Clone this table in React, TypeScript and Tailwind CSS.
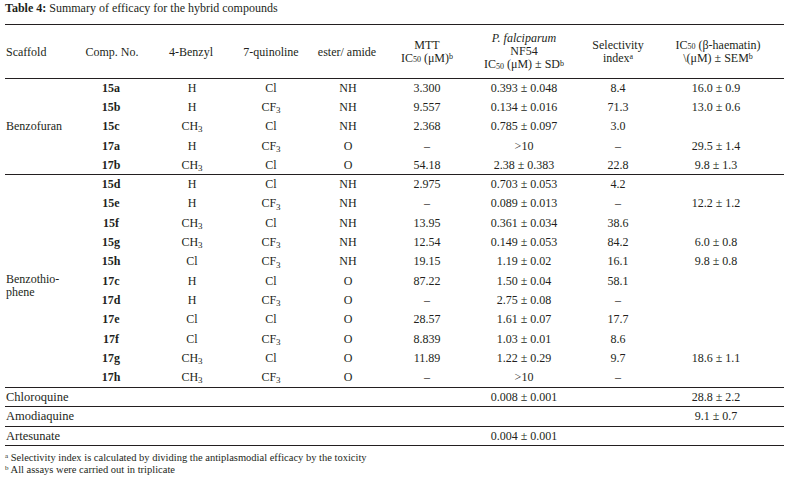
const rows1 = [
  ["15a", "H", "Cl", "NH", "3.300", "0.393 ± 0.048", "8.4", "16.0 ± 0.9"],
  ["15b", "H", "CF3", "NH", "9.557", "0.134 ± 0.016", "71.3", "13.0 ± 0.6"],
  ["15c", "CH3", "Cl", "NH", "2.368", "0.785 ± 0.097", "3.0", ""],
  ["17a", "H", "CF3", "O", "–", ">10", "–", "29.5 ± 1.4"],
  ["17b", "CH3", "Cl", "O", "54.18", "2.38 ± 0.383", "22.8", "9.8 ± 1.3"],
];

const rows2 = [
  ["15d", "H", "Cl", "NH", "2.975", "0.703 ± 0.053", "4.2", ""],
  ["15e", "H", "CF3", "NH", "–", "0.089 ± 0.013", "–", "12.2 ± 1.2"],
  ["15f", "CH3", "Cl", "NH", "13.95", "0.361 ± 0.034", "38.6", ""],
  ["15g", "CH3", "CF3", "NH", "12.54", "0.149 ± 0.053", "84.2", "6.0 ± 0.8"],
  ["15h", "Cl", "CF3", "NH", "19.15", "1.19 ± 0.02", "16.1", "9.8 ± 0.8"],
  ["17c", "H", "Cl", "O", "87.22", "1.50 ± 0.04", "58.1", ""],
  ["17d", "H", "CF3", "O", "–", "2.75 ± 0.08", "–", ""],
  ["17e", "Cl", "Cl", "O", "28.57", "1.61 ± 0.07", "17.7", ""],
  ["17f", "Cl", "CF3", "O", "8.839", "1.03 ± 0.01", "8.6", ""],
  ["17g", "CH3", "Cl", "O", "11.89", "1.22 ± 0.29", "9.7", "18.6 ± 1.1"],
  ["17h", "CH3", "CF3", "O", "–", ">10", "–", ""],
];

const references = [
  ["Chloroquine", "0.008 ± 0.001", "28.8 ± 2.2"],
  ["Amodiaquine", "", "9.1 ± 0.7"],
  ["Artesunate", "0.004 ± 0.001", ""],
];

function Chem({ v }: { v: string }) {
  if (v.endsWith("3")) {
    return (
      <>
        {v.slice(0, -1)}
        <sub>3</sub>
      </>
    );
  }
  return <>{v}</>;
}

// header sub/superscripts kept tight so they stay in their own line
function Sup({ children }: { children: React.ReactNode }) {
  return <sup className="top-[-0.3em] text-[8px]">{children}</sup>;
}

function Sub({ children }: { children: React.ReactNode }) {
  return <sub className="bottom-[-0.1em] text-[8px]">{children}</sub>;
}

function DataRow({ r, scaffold, last }: { r: string[]; scaffold?: React.ReactNode; last?: boolean }) {
  return (
    <tr className={`h-[19.3px] ${last ? "border-b border-[#231f20]" : ""}`}>
      {scaffold}
      <td className="text-center font-bold pr-[2px]">{r[0]}</td>
      <td className="text-center pl-[2px]">
        <Chem v={r[1]} />
      </td>
      <td className="text-center">
        <Chem v={r[2]} />
      </td>
      <td className="text-center pl-[2px]">{r[3]}</td>
      <td className="text-center">{r[4]}</td>
      <td className="text-center">{r[5]}</td>
      <td className="text-center">{r[6]}</td>
      <td className="text-center pr-[4px]">{r[7]}</td>
    </tr>
  );
}

export default function App() {
  return (
    <div className="w-[788px] h-[481px] bg-white text-[#231f20] font-['Liberation_Serif',serif] px-[5px] pt-[1px] overflow-hidden">
      <p className="text-[12px] leading-[14px]">
        <span className="font-bold">Table 4:</span> Summary of efficacy for the hybrid compounds
      </p>

      <table className="table-fixed border-collapse w-[779px] mt-[9px] text-[12px] leading-[13px]">
        <colgroup>
          <col className="w-[75px]" />
          <col className="w-[64px]" />
          <col className="w-[94px]" />
          <col className="w-[66px]" />
          <col className="w-[86px]" />
          <col className="w-[74px]" />
          <col className="w-[120px]" />
          <col className="w-[68px]" />
          <col className="w-[132px]" />
        </colgroup>
        <thead>
          <tr className="h-[54px] border-y-[1.3px] border-[#231f20] align-middle">
            <th className="text-left font-normal pl-[1px] pt-[2px]">Scaffold</th>
            <th className="font-normal whitespace-nowrap pt-[2px]">Comp. No.</th>
            <th className="font-normal pt-[2px]">4-Benzyl</th>
            <th className="font-normal whitespace-nowrap pt-[2px]">7-quinoline</th>
            <th className="font-normal whitespace-nowrap pt-[2px]">ester/ amide</th>
            <th className="font-normal whitespace-nowrap">
              MTT
              <br />
              IC<Sub>50</Sub> (μM)<Sup>b</Sup>
            </th>
            <th className="font-normal whitespace-nowrap">
              <i>P. falciparum</i>
              <br />
              NF54
              <br />
              IC<Sub>50</Sub> (μM) ± SD<Sup>b</Sup>
            </th>
            <th className="font-normal whitespace-nowrap">
              Selectivity
              <br />
              index<Sup>a</Sup>
            </th>
            <th className="font-normal whitespace-nowrap">
              IC<Sub>50</Sub> (β-haematin)
              <br />
              \(μM) ± SEM<Sup>b</Sup>
            </th>
          </tr>
        </thead>
        <tbody>
          {rows1.map((r, i) => (
            <DataRow
              key={r[0]}
              r={r}
              last={i === rows1.length - 1}
              scaffold={
                i === 0 ? (
                  <td rowSpan={rows1.length} className="text-left align-middle pl-[1px]">
                    Benzofuran
                  </td>
                ) : undefined
              }
            />
          ))}
          {rows2.map((r, i) => (
            <DataRow
              key={r[0]}
              r={r}
              last={i === rows2.length - 1}
              scaffold={
                i === 0 ? (
                  <td rowSpan={rows2.length} className="text-left align-middle pl-[1px] pt-[9px] leading-[13px]">
                    Benzothio-
                    <br />
                    phene
                  </td>
                ) : undefined
              }
            />
          ))}
          {references.map((r) => (
            <tr key={r[0]} className="h-[19.5px] border-b border-[#231f20]">
              <td colSpan={5} className="text-left text-[12.5px] pl-[1px]">
                {r[0]}
              </td>
              <td />
              <td className="text-center">{r[1]}</td>
              <td />
              <td className="text-center pr-[4px]">{r[2]}</td>
            </tr>
          ))}
        </tbody>
      </table>

      <div className="mt-[6px] text-[10.5px] leading-[12px]">
        <p>
          <sup className="text-[7px]">a</sup> Selectivity index is calculated by dividing the antiplasmodial efficacy by the toxicity
        </p>
        <p>
          <sup className="text-[7px]">b</sup> All assays were carried out in triplicate
        </p>
      </div>
    </div>
  );
}
